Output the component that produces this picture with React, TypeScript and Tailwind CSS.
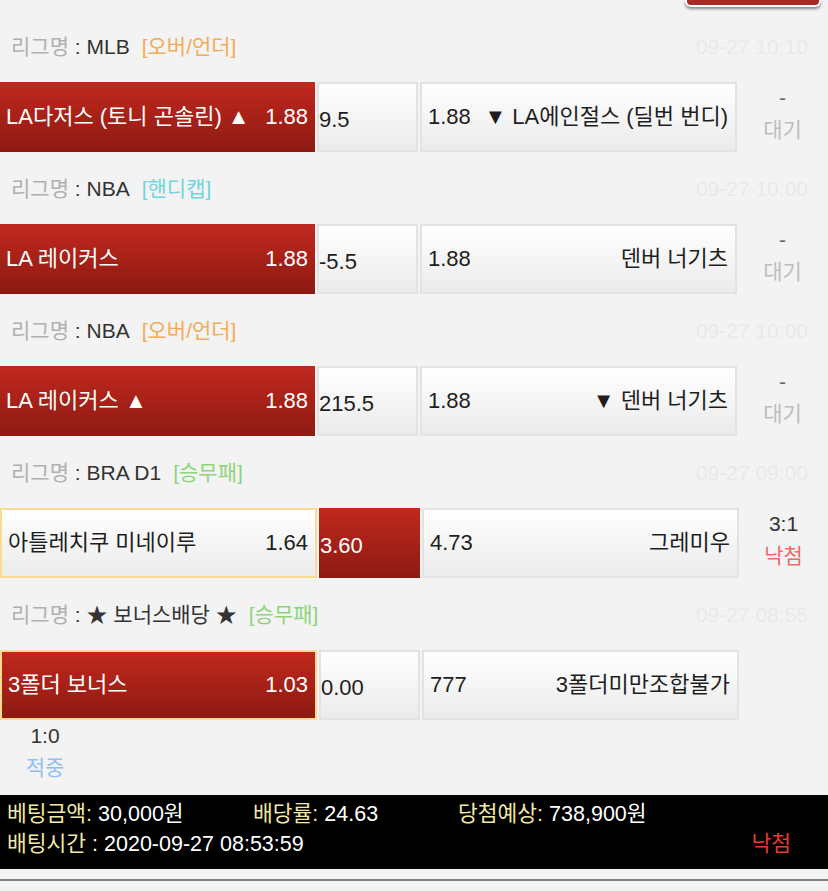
import React from "react";

type Row = {
  league: string;
  type: string;
  typeColor: string;
  date: string;
  home: string;
  homeOdds: string;
  draw: string;
  awayOdds: string;
  away: string;
  sel: "home" | "draw";
  homeBorder: boolean;
  res1: string;
  res2: string;
  res2Color: string;
  res1Color: string;
};

const rows: Row[] = [
  {
    league: "MLB",
    type: "[오버/언더]",
    typeColor: "text-[#f5ac57]",
    date: "09-27 10:10",
    home: "LA다저스 (토니 곤솔린) ▲",
    homeOdds: "1.88",
    draw: "9.5",
    awayOdds: "1.88",
    away: "▼ LA에인절스 (딜번 번디)",
    sel: "home",
    homeBorder: false,
    res1: "-",
    res2: "대기",
    res1Color: "text-[#666]",
    res2Color: "text-[#bdbdbd]",
  },
  {
    league: "NBA",
    type: "[핸디캡]",
    typeColor: "text-[#72d4dc]",
    date: "09-27 10:00",
    home: "LA 레이커스",
    homeOdds: "1.88",
    draw: "-5.5",
    awayOdds: "1.88",
    away: "덴버 너기츠",
    sel: "home",
    homeBorder: false,
    res1: "-",
    res2: "대기",
    res1Color: "text-[#666]",
    res2Color: "text-[#bdbdbd]",
  },
  {
    league: "NBA",
    type: "[오버/언더]",
    typeColor: "text-[#f5ac57]",
    date: "09-27 10:00",
    home: "LA 레이커스 ▲",
    homeOdds: "1.88",
    draw: "215.5",
    awayOdds: "1.88",
    away: "▼ 덴버 너기츠",
    sel: "home",
    homeBorder: false,
    res1: "-",
    res2: "대기",
    res1Color: "text-[#666]",
    res2Color: "text-[#bdbdbd]",
  },
  {
    league: "BRA D1",
    type: "[승무패]",
    typeColor: "text-[#8ed47c]",
    date: "09-27 09:00",
    home: "아틀레치쿠 미네이루",
    homeOdds: "1.64",
    draw: "3.60",
    awayOdds: "4.73",
    away: "그레미우",
    sel: "draw",
    homeBorder: true,
    res1: "3:1",
    res2: "낙첨",
    res1Color: "text-[#333]",
    res2Color: "text-[#f06b6b]",
  },
  {
    league: "★ 보너스배당 ★",
    type: "[승무패]",
    typeColor: "text-[#8ed47c]",
    date: "09-27 08:55",
    home: "3폴더 보너스",
    homeOdds: "1.03",
    draw: "0.00",
    awayOdds: "777",
    away: "3폴더미만조합불가",
    sel: "home",
    homeBorder: true,
    res1: "1:0",
    res2: "적중",
    res1Color: "text-[#333]",
    res2Color: "text-[#8ec1f4]",
  },
];

const RED = "bg-[linear-gradient(to_bottom,#c1281e,#8d1a12)]";
const WHITE = "bg-[linear-gradient(to_bottom,#ffffff,#ebebeb)]";

function Result({ r }: { r: Row }) {
  return (
    <div className="flex flex-col items-center text-[21px] leading-none">
      <div className={`h-[30px] flex items-center ${r.res1Color}`}>{r.res1}</div>
      <div className={`h-[34px] flex items-center ${r.res2Color}`}>{r.res2}</div>
    </div>
  );
}

function Block({ r, last }: { r: Row; last: boolean }) {
  const homeSel = r.sel === "home";
  const drawSel = r.sel === "draw";
  const wide = r.homeBorder;
  return (
    <div>
      <div className="h-[72px] flex items-center justify-between pl-[11px] pr-[20px] text-[21px] leading-none">
        <div className="flex items-center">
          <span className="text-[#b0b0b0]">리그명</span>
          <span className="text-[#333]">&nbsp;: {r.league}</span>
          <span className={`ml-[12px] ${r.typeColor}`}>{r.type}</span>
        </div>
        <div className="text-[#e9e9e9]">{r.date}</div>
      </div>
      <div className="flex h-[70px] text-[22px] leading-none">
        <div
          className={`${wide ? "w-[317px]" : "w-[315px]"} shrink-0 flex items-center justify-between pl-[6px] pr-[7px] ${
            homeSel ? `${RED} text-white` : `${WHITE} text-[#1e1e1e]`
          } ${r.homeBorder ? "border-2 border-[#f8dc8f]" : ""}`}
        >
          <span>{r.home}</span>
          <span>{r.homeOdds}</span>
        </div>
        <div
          className={`ml-[2px] w-[101px] shrink-0 flex items-center pt-[5px] ${
            drawSel ? `${RED} text-white pl-[1px]` : `${WHITE} text-[#1e1e1e] border-2 border-[#e3e3e3]`
          }`}
        >
          <span>{r.draw}</span>
        </div>
        <div
          className={`ml-[2px] w-[317px] shrink-0 flex items-center justify-between pl-[6px] pr-[7px] ${WHITE} text-[#1e1e1e] border-2 border-[#e3e3e3]`}
        >
          <span>{r.awayOdds}</span>
          <span>{r.away}</span>
        </div>
        {!last && (
          <div className="flex-1 flex justify-center">
            <Result r={r} />
          </div>
        )}
      </div>
      {last && (
        <div className="w-[90px] h-[70px] flex justify-center">
          <Result r={r} />
        </div>
      )}
    </div>
  );
}

export default function App() {
  return (
    <div className="w-[828px] min-h-[891px] bg-[#f3f3f3] font-['Liberation_Sans','Noto_Sans_CJK_KR',sans-serif] [font-feature-settings:'palt'] overflow-hidden">
      <div className="h-[10px] flex justify-end pr-[7px]">
        <div className="w-[136px] h-[7px] rounded-b-[6px] bg-[#a72a25] border-2 border-t-0 border-white shadow-[0_2px_3px_rgba(0,0,0,0.45)]" />
      </div>
      {rows.map((r, i) => (
        <Block key={i} r={r} last={i === rows.length - 1} />
      ))}
      <div className="mt-[5px] bg-black pt-[5px] pb-[9px] pl-[7px] pr-[37px] text-[21.5px] leading-none">
        <div className="h-[30px] flex items-center">
          <div className="w-[246px]">
            <span className="text-[#f1e7a7]">베팅금액:</span>
            <span className="text-white"> 30,000원</span>
          </div>
          <div className="w-[205px]">
            <span className="text-[#f1e7a7]">배당률:</span>
            <span className="text-white"> 24.63</span>
          </div>
          <div>
            <span className="text-[#f1e7a7]">당첨예상:</span>
            <span className="text-white"> 738,900원</span>
          </div>
        </div>
        <div className="h-[30px] flex items-center justify-between">
          <div>
            <span className="text-[#f1e7a7]">배팅시간</span>
            <span className="text-white"> : 2020-09-27 08:53:59</span>
          </div>
          <div className="text-[#e8392c]">낙첨</div>
        </div>
      </div>
      <div className="mt-[10px] h-[2px] bg-[#808080]" />
    </div>
  );
}
